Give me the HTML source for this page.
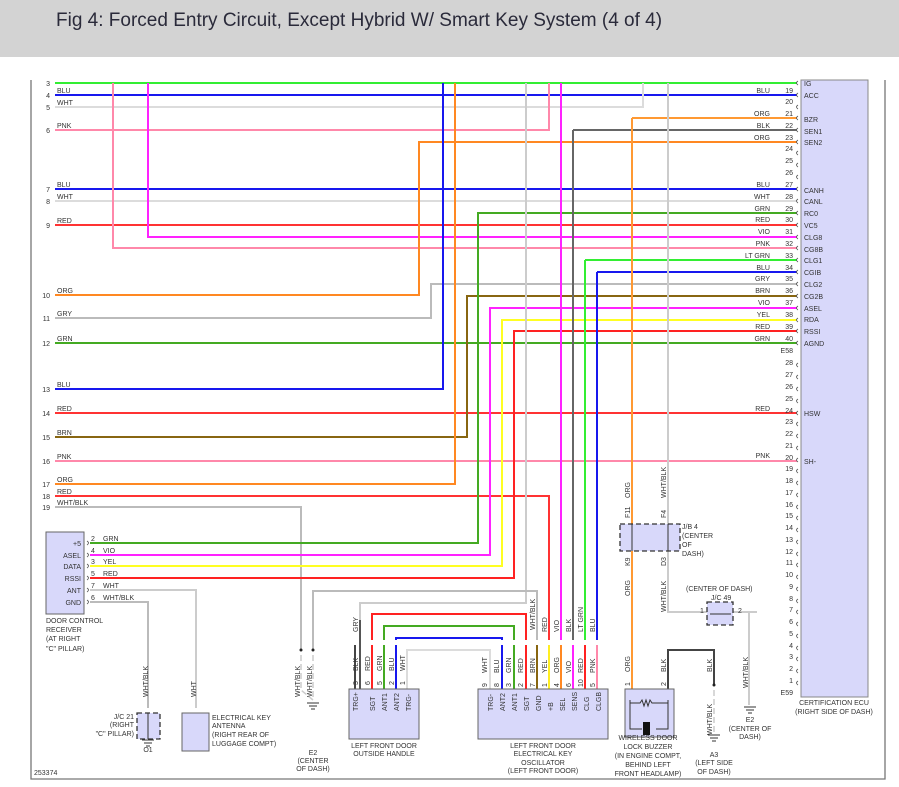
<!DOCTYPE html>
<html><head><meta charset="utf-8"><style>
html,body{margin:0;padding:0;background:#fff;}
body{width:899px;height:787px;overflow:hidden;position:relative;font-family:"Liberation Sans",sans-serif;}
.hdr{position:absolute;left:0;top:0;width:899px;height:57px;background:#d3d3d3;}
.hdr span{position:absolute;left:56px;top:10px;font-size:19px;color:#2a2a3a;}
svg{position:absolute;left:0;top:0;}
svg text{font-family:"Liberation Sans",sans-serif;font-size:7px;fill:#333;}
</style></head><body>
<div class="hdr"><span>Fig 4: Forced Entry Circuit, Except Hybrid W/ Smart Key System (4 of 4)</span></div>
<svg width="899" height="787" viewBox="0 0 899 787">
<g fill="none" stroke="#777" stroke-width="1.3">
<path d="M31 80V779H885V80"/>
</g>
<rect x="801" y="80" width="67" height="617" fill="#d8d8fa" stroke="#888" stroke-width="1"/>
<g fill="none" stroke-width="2">
<path d="M55 83H797" stroke="#33ee33"/>
<path d="M55 95H797" stroke="#1818ee"/>
<path d="M55 107H643V83" stroke="#dcdcdc"/>
<path d="M55 130H549V83" stroke="#ff88aa"/>
<path d="M55 189H797" stroke="#1818ee"/>
<path d="M55 201H797" stroke="#dcdcdc"/>
<path d="M55 225H797" stroke="#ff3333"/>
<path d="M113 83V248H797" stroke="#ff88aa"/>
<path d="M148 83V237H797" stroke="#ff22ff"/>
<path d="M55 295H419V142H797" stroke="#ff8822"/>
<path d="M55 318H431V284H797" stroke="#bbbbbb"/>
<path d="M55 343H797" stroke="#44aa22"/>
<path d="M55 389H443V83" stroke="#1818ee"/>
<path d="M55 413H797" stroke="#ff3333"/>
<path d="M55 437H467V296H797" stroke="#886611"/>
<path d="M55 461H797" stroke="#ff88aa"/>
<path d="M55 484H455V83" stroke="#ff8822"/>
<path d="M55 496H549V640" stroke="#ff3333"/>
<path d="M55 507H301V650" stroke="#bbbbbb"/>
<path d="M90 543H478V213H797" stroke="#44aa22"/>
<path d="M90 555H490V308H797" stroke="#ff22ff"/>
<path d="M90 566H502V320H797" stroke="#ffff22"/>
<path d="M90 578H514V331H797" stroke="#ff2222"/>
<path d="M90 590H196V708" stroke="#cccccc"/>
<path d="M90 602H148V708" stroke="#bbbbbb"/>
<path d="M526 83V603H360V620" stroke="#cccccc"/>
<path d="M313 650V591H537V640" stroke="#bbbbbb"/>
<path d="M372 640V614H526V640" stroke="#ff2222"/>
<path d="M384 640V626H514V640" stroke="#44aa22"/>
<path d="M396 640V638H502V640" stroke="#1818ee"/>
<path d="M407 689V650H490V689" stroke="#dcdcdc"/>
<path d="M561 83V640" stroke="#ff22ff"/>
<path d="M573 130H797M573 130V640" stroke="#666"/>
<path d="M585 260H797M585 260V640" stroke="#33ee33"/>
<path d="M597 272H797M597 272V640" stroke="#1818ee"/>
<path d="M632 118H797M632 118V689" stroke="#ff9933"/>
<path d="M668 83V612H757" stroke="#cccccc"/>
<path d="M741 612H749V705" stroke="#cccccc"/>
<path d="M668 689V650H714V685" stroke="#444"/>
<path d="M355 645V689" stroke="#444"/>
<path d="M372 645V689" stroke="#ff2222"/>
<path d="M384 645V689" stroke="#44aa22"/>
<path d="M396 645V689" stroke="#1818ee"/>
<path d="M502 645V689" stroke="#1818ee"/>
<path d="M514 645V689" stroke="#44aa22"/>
<path d="M526 645V689" stroke="#ff2222"/>
<path d="M537 645V689" stroke="#886611"/>
<path d="M549 645V689" stroke="#ffee22"/>
<path d="M561 645V689" stroke="#ff8822"/>
<path d="M573 645V689" stroke="#ff22ff"/>
<path d="M585 645V689" stroke="#ff2222"/>
<path d="M597 645V689" stroke="#ff88aa"/>
<path d="M360 620V689" stroke="#555"/>
</g>
<g fill="none" stroke="#ccc" stroke-width="1.5" stroke-dasharray="6,3">
<path d="M301 655V690L313 700M313 655V700"/>
<path d="M714 690V732"/>
</g>
<g fill="#222"><circle cx="301" cy="650" r="1.5"/><circle cx="313" cy="650" r="1.5"/><circle cx="714" cy="685" r="1.5"/></g>
<g stroke="#333" stroke-width="1"><path d="M307 703h12M309 706h8M311 709h4M708 735h12M710 738h8M712 741h4M744 707h12M746 710h8M748 713h4M142 740h12M144 743h8M146 746h4"/></g>
<g fill="#d8d8fa" stroke="#666" stroke-width="1">
<rect x="46" y="532" width="38" height="82"/>
<rect x="182" y="713" width="27" height="38"/>
<rect x="349" y="689" width="70" height="50"/>
<rect x="478" y="689" width="130" height="50"/>
<rect x="625" y="689" width="49" height="48"/>
</g>
<g fill="#d8d8fa" stroke="#333" stroke-width="1.3" stroke-dasharray="5,3">
<rect x="620" y="524" width="60" height="27"/>
<rect x="707" y="602" width="26" height="23"/>
<rect x="137" y="713" width="23" height="26"/>
</g>
<g stroke="#333" stroke-width="1" fill="none">
<path d="M632 524V551M668 524V551M710 614H731M148 713V739"/>
<path d="M630 700V729H642M656 729H668V700M630 703H640l2-3 2 6 2-6 2 6 2-6 2 3H668"/>
</g>
<rect x="643" y="722" width="7" height="13" fill="#111"/>
<g fill="none" stroke="#555" stroke-width="0.8">
<path d="M798 81q-3 2 0 4M798 93q-3 2 0 4M798 105q-3 2 0 4M798 116q-3 2 0 4M798 128q-3 2 0 4M798 140q-3 2 0 4M798 151q-3 2 0 4M798 163q-3 2 0 4M798 175q-3 2 0 4M798 187q-3 2 0 4M798 199q-3 2 0 4M798 211q-3 2 0 4M798 223q-3 2 0 4M798 235q-3 2 0 4M798 246q-3 2 0 4M798 258q-3 2 0 4M798 270q-3 2 0 4M798 282q-3 2 0 4M798 294q-3 2 0 4M798 306q-3 2 0 4M798 318q-3 2 0 4M798 329q-3 2 0 4M798 341q-3 2 0 4"/>
<path d="M798 363q-3 2 0 4M798 375q-3 2 0 4M798 387q-3 2 0 4M798 399q-3 2 0 4M798 411q-3 2 0 4M798 422q-3 2 0 4M798 434q-3 2 0 4M798 446q-3 2 0 4M798 458q-3 2 0 4M798 469q-3 2 0 4M798 481q-3 2 0 4M798 493q-3 2 0 4M798 505q-3 2 0 4M798 516q-3 2 0 4M798 528q-3 2 0 4M798 540q-3 2 0 4M798 552q-3 2 0 4M798 563q-3 2 0 4M798 575q-3 2 0 4M798 587q-3 2 0 4M798 599q-3 2 0 4M798 610q-3 2 0 4M798 622q-3 2 0 4M798 634q-3 2 0 4M798 646q-3 2 0 4M798 657q-3 2 0 4M798 669q-3 2 0 4M798 681q-3 2 0 4"/>
<path d="M87 541q3 2 0 4M87 553q3 2 0 4M87 564q3 2 0 4M87 576q3 2 0 4M87 588q3 2 0 4M87 600q3 2 0 4"/>
</g>
<g text-anchor="end">
<text x="50" y="86">3</text><text x="50" y="98">4</text><text x="50" y="110">5</text><text x="50" y="133">6</text><text x="50" y="192">7</text><text x="50" y="204">8</text><text x="50" y="228">9</text><text x="50" y="298">10</text><text x="50" y="321">11</text><text x="50" y="346">12</text><text x="50" y="392">13</text><text x="50" y="416">14</text><text x="50" y="440">15</text><text x="50" y="464">16</text><text x="50" y="487">17</text><text x="50" y="499">18</text><text x="50" y="510">19</text>
</g>
<g>
<text x="57" y="93">BLU</text><text x="57" y="105">WHT</text><text x="57" y="128">PNK</text><text x="57" y="187">BLU</text><text x="57" y="199">WHT</text><text x="57" y="223">RED</text><text x="57" y="293">ORG</text><text x="57" y="316">GRY</text><text x="57" y="341">GRN</text><text x="57" y="387">BLU</text><text x="57" y="411">RED</text><text x="57" y="435">BRN</text><text x="57" y="459">PNK</text><text x="57" y="482">ORG</text><text x="57" y="494">RED</text><text x="57" y="505">WHT/BLK</text>
</g>
<g text-anchor="end">
<text x="770" y="93">BLU</text><text x="770" y="116">ORG</text><text x="770" y="128">BLK</text><text x="770" y="140">ORG</text><text x="770" y="187">BLU</text><text x="770" y="199">WHT</text><text x="770" y="211">GRN</text><text x="770" y="222">RED</text><text x="770" y="234">VIO</text><text x="770" y="246">PNK</text><text x="770" y="258">LT GRN</text><text x="770" y="270">BLU</text><text x="770" y="281">GRY</text><text x="770" y="293">BRN</text><text x="770" y="305">VIO</text><text x="770" y="317">YEL</text><text x="770" y="329">RED</text><text x="770" y="341">GRN</text><text x="770" y="411">RED</text><text x="770" y="458">PNK</text>
<text x="793" y="93">19</text><text x="793" y="104">20</text><text x="793" y="116">21</text><text x="793" y="128">22</text><text x="793" y="140">23</text><text x="793" y="151">24</text><text x="793" y="163">25</text><text x="793" y="175">26</text><text x="793" y="187">27</text><text x="793" y="199">28</text><text x="793" y="211">29</text><text x="793" y="222">30</text><text x="793" y="234">31</text><text x="793" y="246">32</text><text x="793" y="258">33</text><text x="793" y="270">34</text><text x="793" y="281">35</text><text x="793" y="293">36</text><text x="793" y="305">37</text><text x="793" y="317">38</text><text x="793" y="329">39</text><text x="793" y="341">40</text><text x="793" y="353">E58</text>
<text x="793" y="365">28</text><text x="793" y="377">27</text><text x="793" y="389">26</text><text x="793" y="401">25</text><text x="793" y="413">24</text><text x="793" y="424">23</text><text x="793" y="436">22</text><text x="793" y="448">21</text><text x="793" y="460">20</text><text x="793" y="471">19</text><text x="793" y="483">18</text><text x="793" y="495">17</text><text x="793" y="507">16</text><text x="793" y="518">15</text><text x="793" y="530">14</text><text x="793" y="542">13</text><text x="793" y="554">12</text><text x="793" y="565">11</text><text x="793" y="577">10</text><text x="793" y="589">9</text><text x="793" y="601">8</text><text x="793" y="612">7</text><text x="793" y="624">6</text><text x="793" y="636">5</text><text x="793" y="648">4</text><text x="793" y="659">3</text><text x="793" y="671">2</text><text x="793" y="683">1</text><text x="793" y="695">E59</text>
</g>
<g>
<text x="804" y="86">IG</text><text x="804" y="98">ACC</text><text x="804" y="122">BZR</text><text x="804" y="134">SEN1</text><text x="804" y="145">SEN2</text><text x="804" y="193">CANH</text><text x="804" y="204">CANL</text><text x="804" y="216">RC0</text><text x="804" y="228">VC5</text><text x="804" y="240">CLG8</text><text x="804" y="252">CG8B</text><text x="804" y="263">CLG1</text><text x="804" y="275">CGIB</text><text x="804" y="287">CLG2</text><text x="804" y="299">CG2B</text><text x="804" y="311">ASEL</text><text x="804" y="322">RDA</text><text x="804" y="334">RSSI</text><text x="804" y="346">AGND</text><text x="804" y="416">HSW</text><text x="804" y="464">SH-</text>
</g>
<text x="834" y="705" text-anchor="middle">CERTIFICATION ECU</text>
<text x="834" y="714" text-anchor="middle">(RIGHT SIDE OF DASH)</text>
<g text-anchor="end"><text x="81" y="546">+5</text><text x="81" y="558">ASEL</text><text x="81" y="569">DATA</text><text x="81" y="581">RSSI</text><text x="81" y="593">ANT</text><text x="81" y="605">GND</text></g>
<g><text x="91" y="541">2</text><text x="91" y="553">4</text><text x="91" y="564">3</text><text x="91" y="576">5</text><text x="91" y="588">7</text><text x="91" y="600">6</text>
<text x="103" y="541">GRN</text><text x="103" y="553">VIO</text><text x="103" y="564">YEL</text><text x="103" y="576">RED</text><text x="103" y="588">WHT</text><text x="103" y="600">WHT/BLK</text>
<text x="46" y="623">DOOR CONTROL</text><text x="46" y="632">RECEIVER</text><text x="46" y="641">(AT RIGHT</text><text x="46" y="651">"C" PILLAR)</text>
<text x="212" y="720">ELECTRICAL KEY</text><text x="212" y="728">ANTENNA</text><text x="212" y="737">(RIGHT REAR OF</text><text x="212" y="746">LUGGAGE COMPT)</text>
<text x="34" y="775">253374</text>
<text x="682" y="529">J/B 4</text><text x="682" y="538">(CENTER</text><text x="682" y="547">OF</text><text x="682" y="556">DASH)</text>
<text x="686" y="591">(CENTER OF DASH)</text><text x="711" y="600">J/C 49</text>
<text x="700" y="613">1</text><text x="738" y="613">2</text>
</g>
<g text-anchor="end"><text x="134" y="719">J/C 21</text><text x="134" y="727">(RIGHT</text><text x="134" y="736">"C" PILLAR)</text></g>
<g text-anchor="middle">
<text x="148" y="752">O1</text>
<text x="313" y="755">E2</text><text x="313" y="763">(CENTER</text><text x="313" y="771">OF DASH)</text>
<text x="384" y="748">LEFT FRONT DOOR</text><text x="384" y="756">OUTSIDE HANDLE</text>
<text x="543" y="748">LEFT FRONT DOOR</text><text x="543" y="756">ELECTRICAL KEY</text><text x="543" y="765">OSCILLATOR</text><text x="543" y="773">(LEFT FRONT DOOR)</text>
<text x="648" y="740">WIRELESS DOOR</text><text x="648" y="749">LOCK BUZZER</text><text x="648" y="758">(IN ENGINE COMPT,</text><text x="648" y="767">BEHIND LEFT</text><text x="648" y="776">FRONT HEADLAMP)</text>
<text x="714" y="757">A3</text><text x="714" y="765">(LEFT SIDE</text><text x="714" y="774">OF DASH)</text>
<text x="750" y="722">E2</text><text x="750" y="731">(CENTER OF</text><text x="750" y="739">DASH)</text>
</g>
<g>
<text transform="translate(148,697) rotate(-90)">WHT/BLK</text>
<text transform="translate(196,697) rotate(-90)">WHT</text>
<text transform="translate(300,697) rotate(-90)">WHT/BLK</text>
<text transform="translate(312,697) rotate(-90)">WHT/BLK</text>
<text transform="translate(358,632) rotate(-90)">GRY</text>
<text transform="translate(358,671) rotate(-90)">BLK</text><text transform="translate(370,671) rotate(-90)">RED</text><text transform="translate(382,671) rotate(-90)">GRN</text><text transform="translate(394,671) rotate(-90)">BLU</text><text transform="translate(405,671) rotate(-90)">WHT</text>
<text transform="translate(358,685) rotate(-90)">3</text><text transform="translate(370,685) rotate(-90)">6</text><text transform="translate(382,685) rotate(-90)">5</text><text transform="translate(394,685) rotate(-90)">2</text><text transform="translate(405,685) rotate(-90)">1</text>
<text transform="translate(358,711) rotate(-90)">TRG+</text><text transform="translate(375,711) rotate(-90)">SGT</text><text transform="translate(387,711) rotate(-90)">ANT1</text><text transform="translate(399,711) rotate(-90)">ANT2</text><text transform="translate(411,711) rotate(-90)">TRG-</text>
<text transform="translate(487,673) rotate(-90)">WHT</text><text transform="translate(499,673) rotate(-90)">BLU</text><text transform="translate(511,673) rotate(-90)">GRN</text><text transform="translate(523,673) rotate(-90)">RED</text><text transform="translate(535,673) rotate(-90)">BRN</text><text transform="translate(547,673) rotate(-90)">YEL</text><text transform="translate(559,673) rotate(-90)">ORG</text><text transform="translate(571,673) rotate(-90)">VIO</text><text transform="translate(583,673) rotate(-90)">RED</text><text transform="translate(595,673) rotate(-90)">PNK</text>
<text transform="translate(487,687) rotate(-90)">9</text><text transform="translate(499,687) rotate(-90)">8</text><text transform="translate(511,687) rotate(-90)">3</text><text transform="translate(523,687) rotate(-90)">2</text><text transform="translate(535,687) rotate(-90)">7</text><text transform="translate(547,687) rotate(-90)">1</text><text transform="translate(559,687) rotate(-90)">4</text><text transform="translate(571,687) rotate(-90)">6</text><text transform="translate(583,687) rotate(-90)">10</text><text transform="translate(595,687) rotate(-90)">5</text>
<text transform="translate(493,711) rotate(-90)">TRG-</text><text transform="translate(505,711) rotate(-90)">ANT2</text><text transform="translate(517,711) rotate(-90)">ANT1</text><text transform="translate(529,711) rotate(-90)">SGT</text><text transform="translate(541,711) rotate(-90)">GND</text><text transform="translate(553,711) rotate(-90)">+B</text><text transform="translate(565,711) rotate(-90)">SEL</text><text transform="translate(577,711) rotate(-90)">SENS</text><text transform="translate(589,711) rotate(-90)">CLG</text><text transform="translate(601,711) rotate(-90)">CLGB</text>
<text transform="translate(535,630) rotate(-90)">WHT/BLK</text><text transform="translate(547,632) rotate(-90)">RED</text><text transform="translate(559,632) rotate(-90)">VIO</text><text transform="translate(571,632) rotate(-90)">BLK</text><text transform="translate(583,632) rotate(-90)">LT GRN</text><text transform="translate(595,632) rotate(-90)">BLU</text>
<text transform="translate(630,498) rotate(-90)">ORG</text><text transform="translate(630,518) rotate(-90)">F11</text>
<text transform="translate(666,498) rotate(-90)">WHT/BLK</text><text transform="translate(666,518) rotate(-90)">F4</text>
<text transform="translate(630,566) rotate(-90)">K9</text><text transform="translate(666,566) rotate(-90)">D3</text>
<text transform="translate(630,596) rotate(-90)">ORG</text><text transform="translate(666,612) rotate(-90)">WHT/BLK</text>
<text transform="translate(630,672) rotate(-90)">ORG</text><text transform="translate(666,672) rotate(-90)">BLK</text>
<text transform="translate(630,686) rotate(-90)">1</text><text transform="translate(666,686) rotate(-90)">2</text>
<text transform="translate(712,672) rotate(-90)">BLK</text><text transform="translate(712,735) rotate(-90)">WHT/BLK</text>
<text transform="translate(748,688) rotate(-90)">WHT/BLK</text>
</g>
</svg>
</body></html>
